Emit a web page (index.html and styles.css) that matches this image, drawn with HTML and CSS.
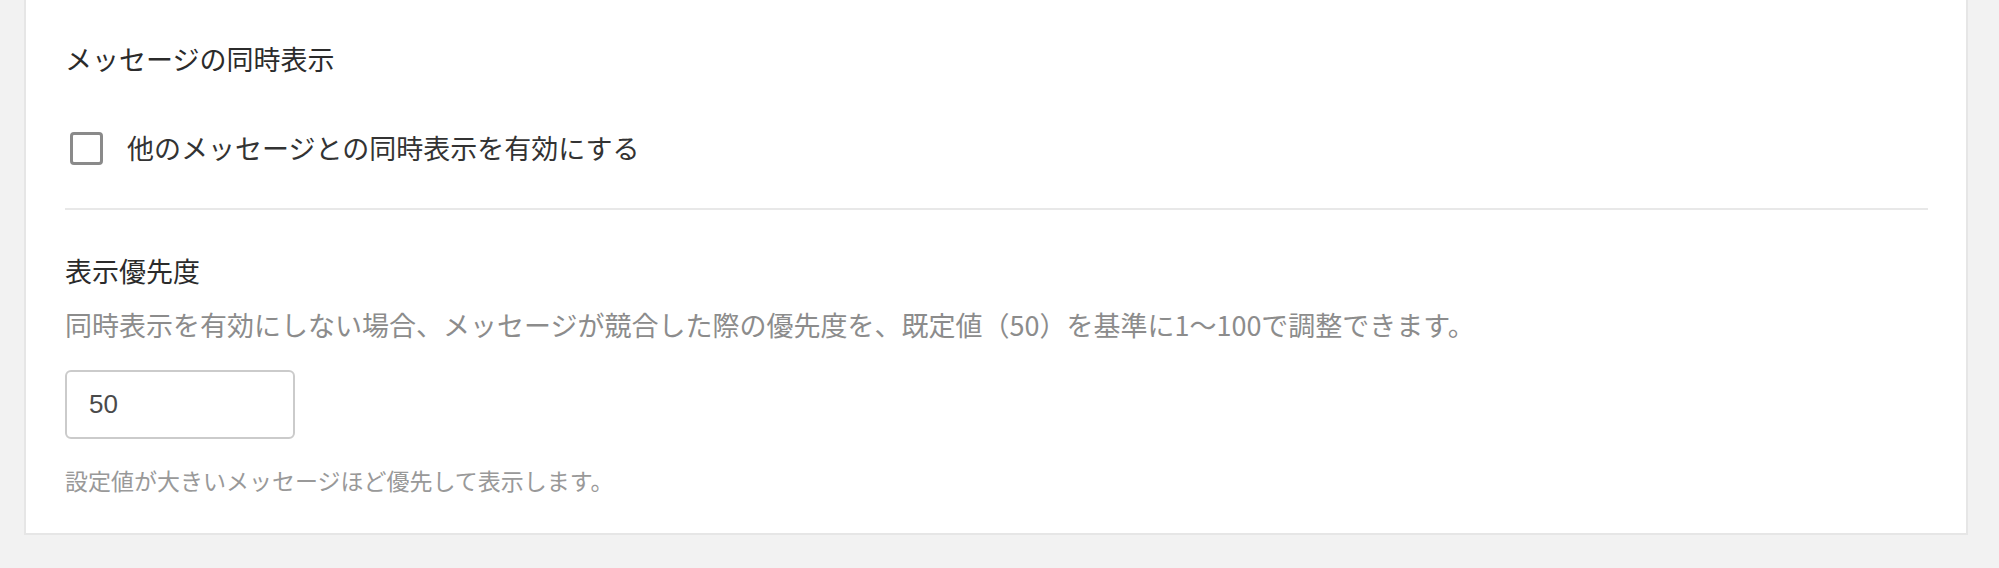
FILE: index.html
```html
<!DOCTYPE html>
<html lang="ja">
  <head>
    <meta charset="utf-8">
    <title>メッセージ設定</title>
    <link rel="stylesheet" href="styles.css">
  </head>
  <body>
    <div class="card">
      <div class="section">
        <h2 class="section-title">メッセージの同時表示</h2>
        <label class="check-row">
          <span class="check-box"></span>
          <span class="check-label">他のメッセージとの同時表示を有効にする</span>
        </label>
      </div>
      <div class="section section-priority">
        <h2 class="section-title">表示優先度</h2>
        <p class="desc">同時表示を有効にしない場合、メッセージが競合した際の優先度を、既定値（50）を基準に1〜100で調整できます。</p>
        <div class="field">50</div>
        <p class="note">設定値が大きいメッセージほど優先して表示します。</p>
      </div>
    </div>
  </body>
</html>
```

FILE: styles.css
```css
body { margin: 0; background: #f2f2f2; font-family: "Noto Sans CJK JP", "Noto Sans", sans-serif; color: #333; }
.card { margin: 0 31px 0 24px; background: #fff; border: 2px solid #e6e6e6; border-top: 0; padding: 40px 38px 36px 39px; }
.section-title { margin: 0; font-size: 27px; line-height: 38px; font-weight: normal; color: #2b2b2b; }
.check-row { display: flex; align-items: center; gap: 24px; margin-top: 50px; height: 40px; padding-left: 5px; }
.check-box { width: 27px; height: 27px; border: 3px solid #8a8a8a; border-radius: 4px; }
.check-label { font-size: 27px; line-height: 40px; color: #333; }
.section-priority { margin-top: 40px; border-top: 2px solid #e8e8e8; padding-top: 42px; }
.desc { margin: 16px 0 0; font-size: 27px; line-height: 38px; color: #8c8c8c; }
.field { margin-top: 26px; width: 182px; height: 65px; border: 2px solid #cbcbcb; border-radius: 6px; padding: 0 22px; display: flex; align-items: center; font-family: "Liberation Sans", Arial, sans-serif; font-size: 26px; color: #4a4a4a; }
.note { margin: 24px 0 0; font-size: 23px; line-height: 34px; color: #999; }
```
